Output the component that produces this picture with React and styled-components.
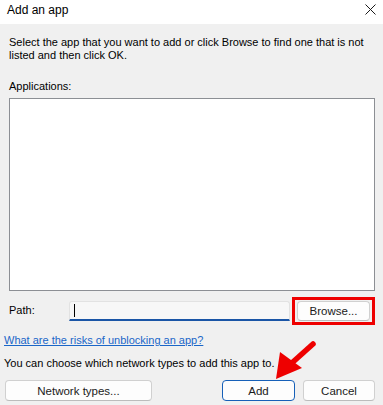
import React from "react";
import styled, { createGlobalStyle } from "styled-components";

const GlobalStyle = createGlobalStyle`
  html, body {
    margin: 0;
    padding: 0;
    background: #f0f0f0;
    font-family: "Segoe UI", "Liberation Sans", "Noto Sans", sans-serif;
    font-size: 11px;
    color: #000;
  }
`;

const App = () => {
  return (
    <>
      <GlobalStyle />
      <Dialog>
        <TitleBar>
          <Title>Add an app</Title>
          <Close>
            <svg width="11" height="11" viewBox="0 0 11 11">
              <path d="M0.5 0.5 L10.5 10.5 M10.5 0.5 L0.5 10.5" stroke="#1a1a1a" strokeWidth="1" />
            </svg>
          </Close>
        </TitleBar>
        <Body>
          <Intro>
            Select the app that you want to add or click Browse to find one that is not
            <br />
            listed and then click OK.
          </Intro>
          <Label>Applications:</Label>
          <ListBox />
          <PathRow>
            <PathLabel>Path:</PathLabel>
            <PathInput>
              <Caret />
            </PathInput>
            <Highlight>
              <Button>Browse...</Button>
            </Highlight>
          </PathRow>
          <Link href="#">What are the risks of unblocking an app?</Link>
          <Note>You can choose which network types to add this app to.</Note>
          <Footer>
            <Button $width="147px">Network types...</Button>
            <Spacer />
            <Button $width="73px" $primary>Add</Button>
            <Button $width="72px">Cancel</Button>
          </Footer>
        </Body>
        <Arrow width="50" height="50" viewBox="0 0 50 50">
          <path d="M41 4 L12 30" stroke="#ee0000" strokeWidth="5.5" strokeLinecap="round" />
          <polygon points="4,39 8,12 30,28" fill="#ee0000" />
        </Arrow>
      </Dialog>
    </>
  );
};

const Dialog = styled.div`
  position: relative;
  width: 383px;
  height: 405px;
  overflow: hidden;
  background: #f0f0f0;
`;

const TitleBar = styled.div`
  height: 24px;
  background: #fff;
  display: flex;
  align-items: center;
  justify-content: space-between;
  padding: 0 8px 0 7px;
`;

const Title = styled.div`
  font-size: 12px;
  margin-top: -4px;
`;

const Close = styled.div`
  display: flex;
  align-items: center;
  margin-top: -5px;
  margin-right: -1px;
`;

const Body = styled.div`
  display: flex;
  flex-direction: column;
  padding: 0 8px 0 4px;
`;

const Intro = styled.div`
  margin-top: 12px;
  padding-left: 5px;
  line-height: 13px;
  white-space: nowrap;
`;

const Label = styled.div`
  margin-top: 18px;
  padding-left: 5px;
  line-height: 13px;
`;

const ListBox = styled.div`
  margin: 5px 0 0 5px;
  height: 191px;
  border: 1px solid #8c8f94;
  background: #fff;
`;

const PathRow = styled.div`
  display: flex;
  align-items: center;
  margin-top: 6px;
`;

const PathLabel = styled.div`
  width: 63px;
  padding-left: 5px;
  margin-top: -2px;
`;

const PathInput = styled.div`
  width: 226px;
  height: 17px;
  background: #f7f7f7;
  border: 1px solid #e2e2e2;
  border-bottom: 2px solid #1a55a6;
  border-radius: 3px 3px 0 0;
  display: flex;
  align-items: center;
  padding-left: 4px;
`;

const Caret = styled.div`
  width: 1px;
  height: 13px;
  background: #000;
`;

const Highlight = styled.div`
  margin-left: 2px;
  border: 3px solid #ee0000;
  padding: 1px 2px;
  display: flex;
`;

const Button = styled.div`
  width: ${(p) => p.$width || "73px"};
  height: 20px;
  box-sizing: border-box;
  background: #fdfdfd;
  border: 1px solid ${(p) => (p.$primary ? "#1660b8" : "#d0d0d0")};
  border-bottom-color: ${(p) => (p.$primary ? "#1660b8" : "#bcbcbc")};
  border-radius: 4px;
  display: flex;
  align-items: center;
  justify-content: center;
  font-size: 11.5px;
  color: #1a1a1a;
`;

const Link = styled.a`
  margin-top: 9px;
  color: #1a66c8;
  text-decoration: underline;
  line-height: 13px;
  align-self: flex-start;
`;

const Note = styled.div`
  margin-top: 10px;
  line-height: 13px;
`;

const Footer = styled.div`
  display: flex;
  align-items: center;
  gap: 8px;
  margin-top: 10px;
  padding-left: 1px;
  & > div {
    height: 21px;
  }
`;

const Spacer = styled.div`
  flex: 1;
`;

const Arrow = styled.svg`
  position: absolute;
  left: 272px;
  top: 340px;
`;

export default App;
